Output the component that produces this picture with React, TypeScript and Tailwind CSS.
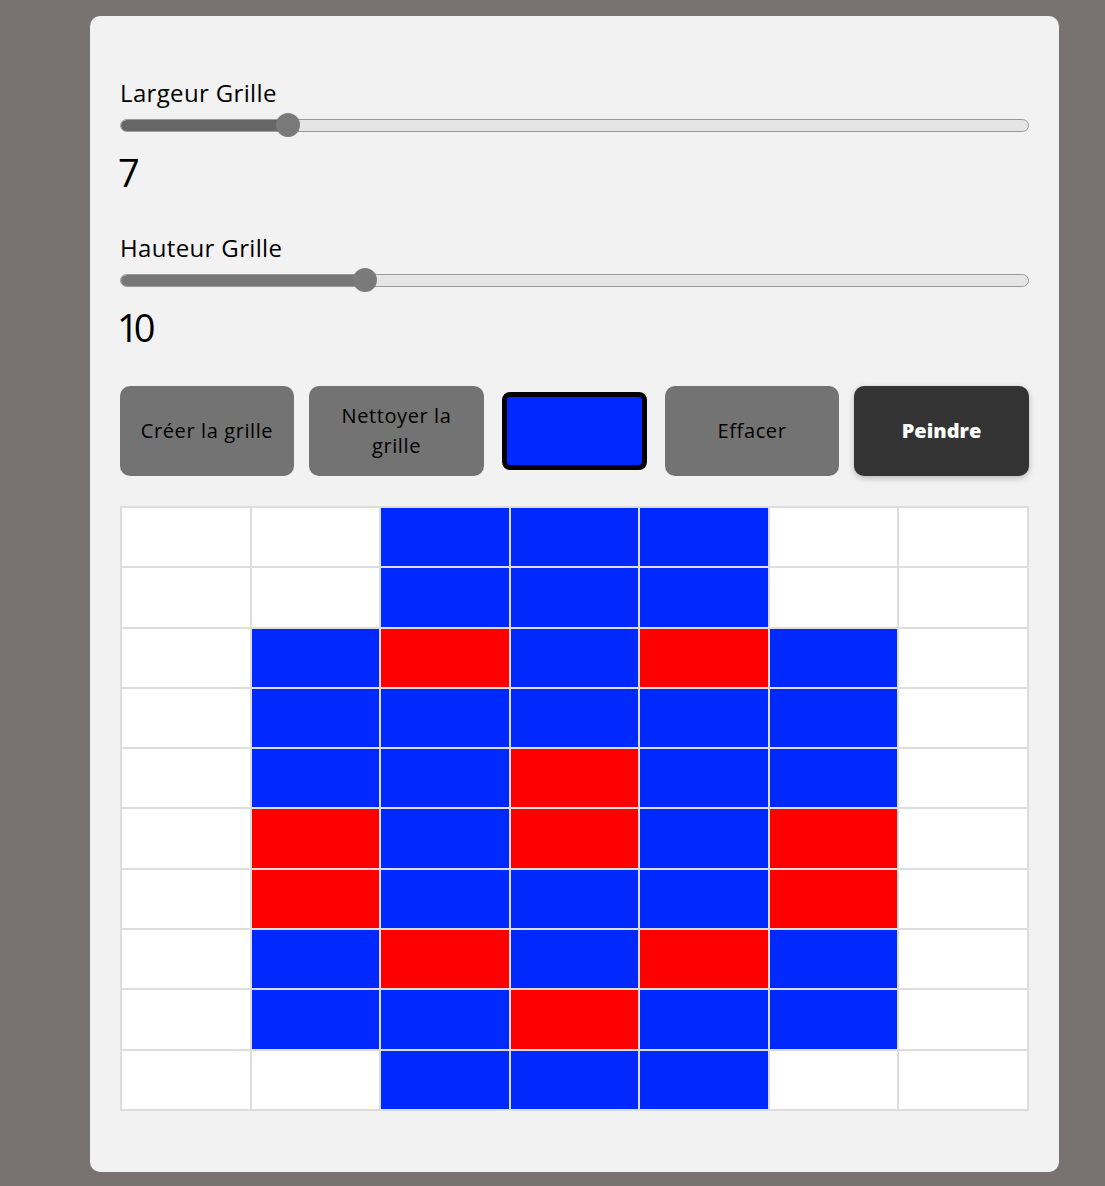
import React from "react";

const B = "#0029ff";
const R = "#ff0000";
const W = "#ffffff";

const pattern: string[] = [
  "WWBBBWW",
  "WWBBBWW",
  "WBRBRBW",
  "WBBBBBW",
  "WBBRBBW",
  "WRBRBRW",
  "WRBBBRW",
  "WBRBRBW",
  "WBBRBBW",
  "WWBBBWW",
];

function Slider({ pct, fill }: { pct: number; fill: string }) {
  return (
    <div className="relative h-[24px] w-full flex items-center">
      <div className="h-[13px] w-full rounded-full border border-[#9a9a9a] bg-[#e5e5e5] overflow-hidden">
        <div className="h-full rounded-full" style={{ width: `${pct}%`, background: fill }} />
      </div>
      <div
        className="absolute top-0 h-[24px] w-[24px] -ml-[12px] rounded-full bg-[#7a7a7a]"
        style={{ left: `${pct}%` }}
      />
    </div>
  );
}

const btn =
  "flex h-[90px] items-center justify-center rounded-[10px] text-[20px] leading-[30px]";

export default function App() {
  const font = { fontFamily: '"Open Sans", "Noto Sans", sans-serif' };
  return (
    <div className="min-h-screen bg-[#787271] pt-[16px] pb-[15px]" style={font}>
      <div className="ml-[90px] w-[969px] rounded-[10px] bg-[#f2f2f2] px-[30px] pt-[62px] pb-[61px]">
        <div className="text-[24px] leading-[30px] tracking-[0.35px] text-black">Largeur Grille</div>
        <div className="mt-[5px]">
          <Slider pct={18.5} fill="#666666" />
        </div>
        <div className="mt-[15px] -ml-[2px] text-[38px] leading-[40px] text-black">7</div>
        <div className="mt-[41px] text-[24px] leading-[30px] tracking-[0.35px] text-black">Hauteur Grille</div>
        <div className="mt-[5px]">
          <Slider pct={27} fill="#777777" />
        </div>
        <div className="mt-[15px] -ml-[3px] text-[38px] leading-[40px] tracking-[-5px] text-black">10</div>

        <div className="mt-[39px] flex h-[90px] items-center">
          <button className={`${btn} w-[174px] bg-[#737373] tracking-[0.6px] text-black`}>
            Créer la grille
          </button>
          <button className={`${btn} ml-[15px] w-[175px] bg-[#737373] px-[20px] tracking-[0.6px] text-black`}>
            Nettoyer la grille
          </button>
          <div className="ml-[18px] h-[78px] w-[145px] rounded-[8px] border-[5px] border-black bg-[#0029ff]" />
          <button className={`${btn} ml-[18px] w-[174px] bg-[#737373] tracking-[0.6px] text-black`}>
            Effacer
          </button>
          <button className={`${btn} ml-[15px] w-[175px] bg-[#333333] font-extrabold text-white shadow-[0_2px_6px_rgba(0,0,0,0.25)]`}>
            Peindre
          </button>
        </div>

        <div className="mt-[30px] grid h-[605px] grid-cols-7 grid-rows-10 gap-[2px] bg-[#dddddd] p-[2px]">
          {pattern.flatMap((row, r) =>
            row.split("").map((c, i) => (
              <div
                key={`${r}-${i}`}
                style={{ background: c === "B" ? B : c === "R" ? R : W }}
              />
            ))
          )}
        </div>
      </div>
    </div>
  );
}
